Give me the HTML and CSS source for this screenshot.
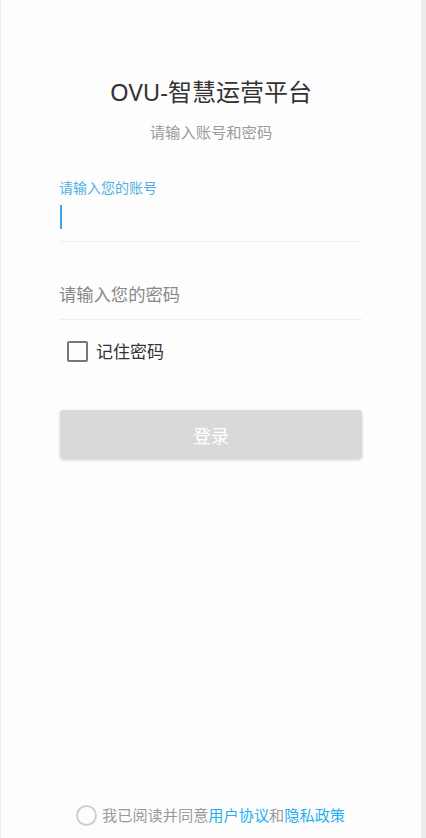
FILE: index.html
```html
<!DOCTYPE html>
<html lang="zh">
<head>
<meta charset="utf-8">
<link rel="stylesheet" href="styles.css">
</head>
<body>
<div class="page">
  <main class="main">
    <h1 class="title">OVU-智慧运营平台</h1>
    <p class="subtitle">请输入账号和密码</p>
    <div class="field field-account">
      <div class="label">请输入您的账号</div>
      <div class="input-line"><span class="cursor"></span></div>
    </div>
    <div class="field field-password">
      <div class="placeholder">请输入您的密码</div>
    </div>
    <label class="remember">
      <span class="checkbox"></span>
      <span class="remember-text">记住密码</span>
    </label>
    <button class="login">登录</button>
    <div class="agree">
      <span class="radio"></span>
      <span class="agree-text">我已阅读并同意<span class="link">用户协议</span>和<span class="link">隐私政策</span></span>
    </div>
  </main>
  <div class="side"></div>
</div>
</body>
</html>
```
FILE: styles.css
```css
* { box-sizing: border-box; }
html, body { margin: 0; padding: 0; background: #fff; }
body { font-family: "Noto Sans", "Noto Sans CJK SC", sans-serif; }
.page {
  display: flex;
  height: 838px;
  width: 426px;
  border-left: 1px solid #ececec;
}
.main {
  flex: 1;
  display: flex;
  flex-direction: column;
  padding: 0 59px;
  background: #fdfdfd;
}
.side { width: 5px; background: #ececec; }
.title {
  margin: 77px 0 0;
  font-size: 24px;
  line-height: 30px;
  font-weight: 400;
  color: #333;
  text-align: center;
}
.subtitle {
  margin: 15px 0 0;
  font-size: 15.3px;
  line-height: 20px;
  color: #9a9a9a;
  text-align: center;
}
.field { border-bottom: 1px solid #eeeeee; padding-bottom: 12px; }
.field-account { margin-top: 36px; }
.label { font-size: 14px; line-height: 20px; color: #4fb0e6; margin-left: -1px; }
.input-line { margin-top: 7px; height: 24px; display: flex; }
.cursor { width: 2px; height: 24px; background: #3aa6e8; }
.field-password { margin-top: 41px; }
.placeholder { font-size: 17.3px; line-height: 24px; color: #888; margin-left: -1px; }
.remember {
  margin-top: 21px;
  display: flex;
  align-items: center;
  gap: 8px;
  padding-left: 7px;
}
.checkbox {
  width: 21px;
  height: 21px;
  border: 2px solid #777;
  border-radius: 2px;
}
.remember-text { font-size: 17px; line-height: 21px; color: #333; }
.login {
  margin-top: 48px;
  height: 49px;
  border: none;
  border-radius: 4px;
  background: #d9d9d9;
  color: #fff;
  font-family: inherit;
  font-size: 18px;
  box-shadow: 0 1px 3px rgba(0,0,0,0.18);
}
.agree {
  margin-top: auto;
  margin-bottom: 12px;
  display: flex;
  align-items: center;
  gap: 5px;
  padding-left: 16px;
}
.radio {
  width: 21px;
  height: 21px;
  border: 2px solid #cfcfcf;
  border-radius: 50%;
}
.agree-text { font-size: 15.2px; line-height: 21px; color: #999; white-space: nowrap; }
.link { color: #22b0f0; }
```
